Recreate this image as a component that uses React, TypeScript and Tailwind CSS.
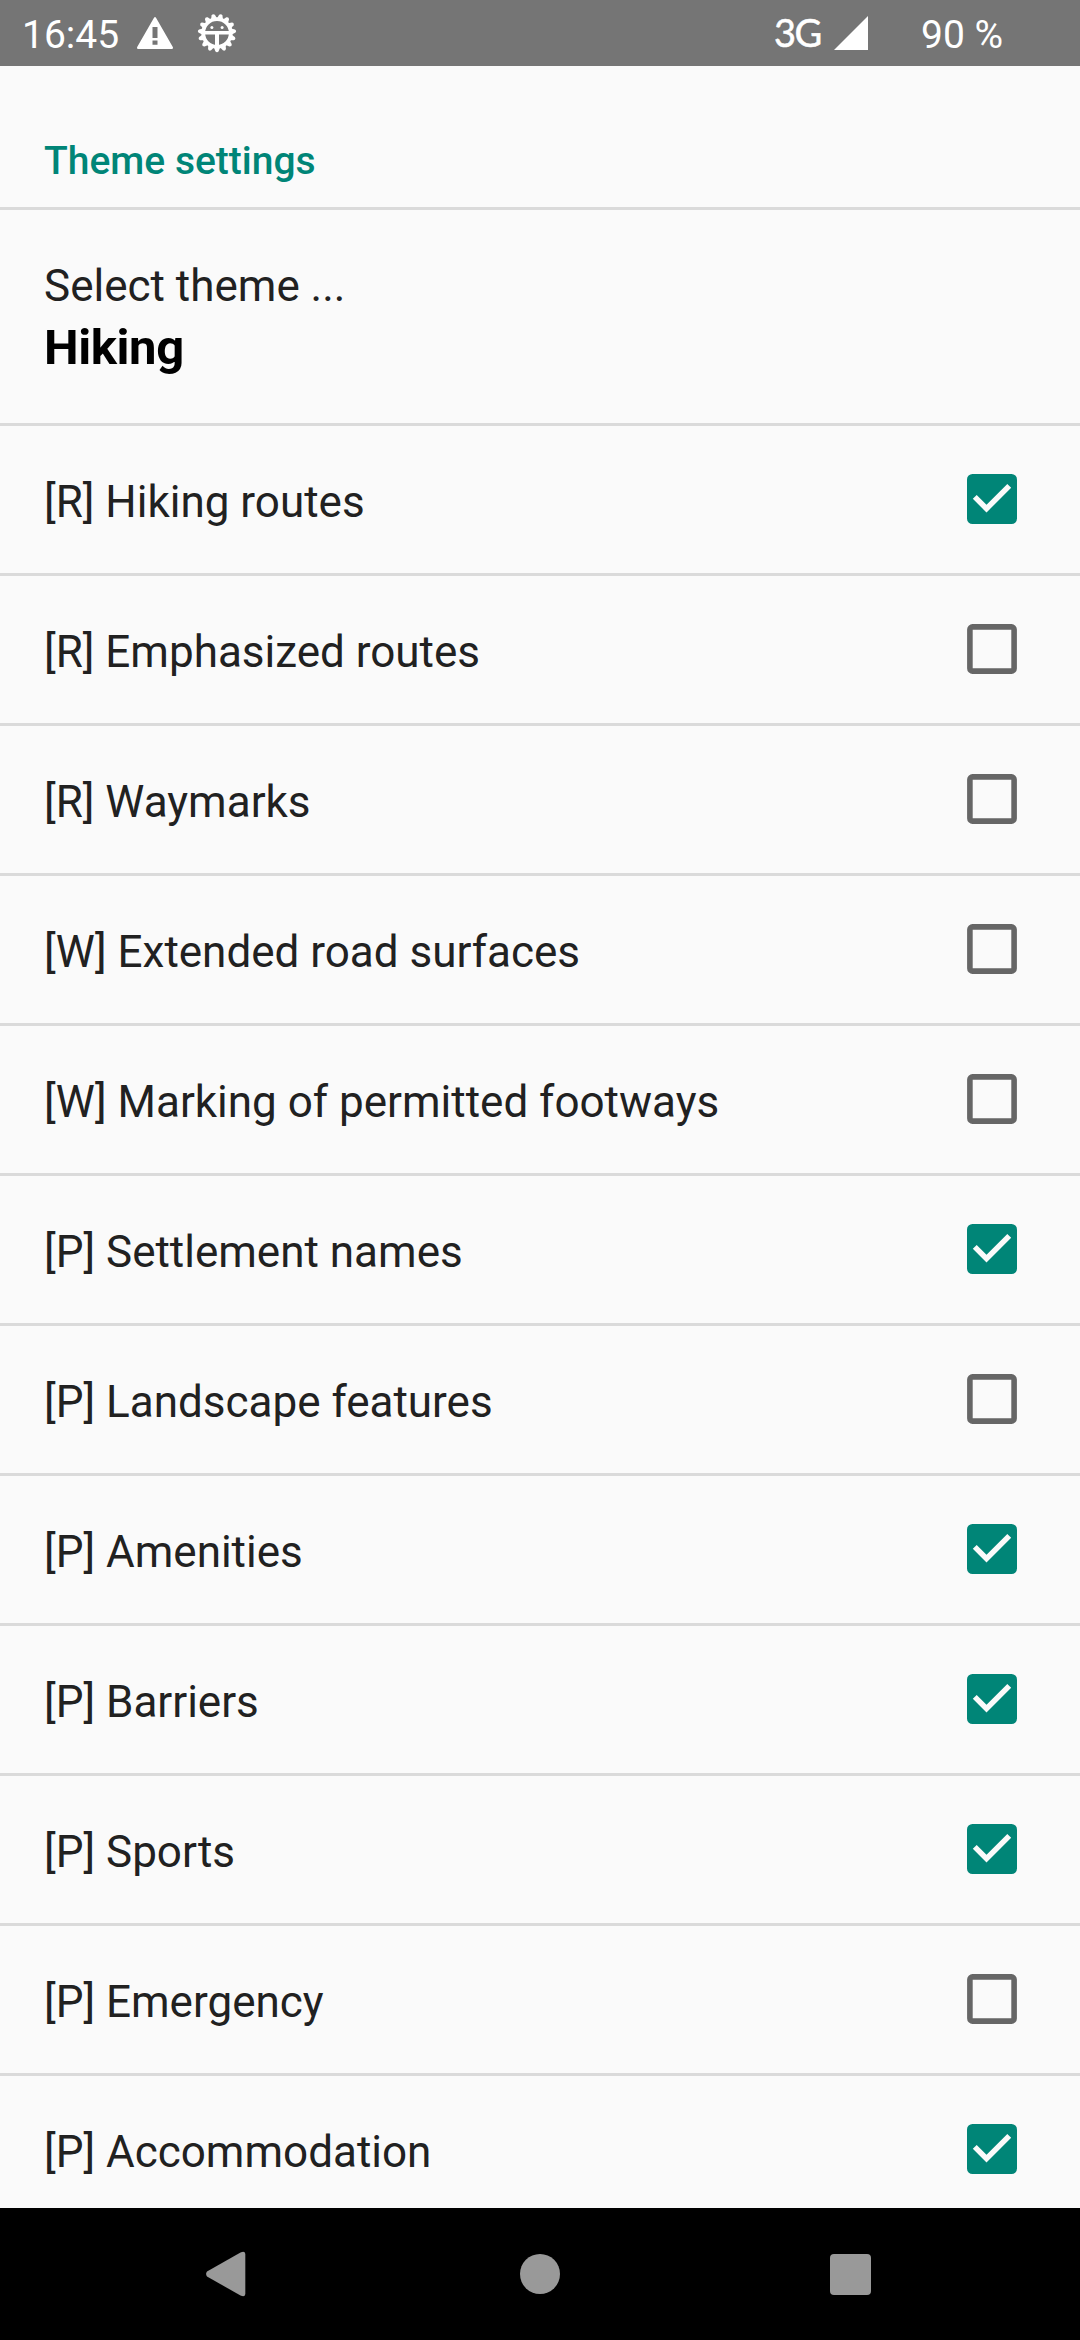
const items: [string, boolean][] = [
  ["[R] Hiking routes", true],
  ["[R] Emphasized routes", false],
  ["[R] Waymarks", false],
  ["[W] Extended road surfaces", false],
  ["[W] Marking of permitted footways", false],
  ["[P] Settlement names", true],
  ["[P] Landscape features", false],
  ["[P] Amenities", true],
  ["[P] Barriers", true],
  ["[P] Sports", true],
  ["[P] Emergency", false],
  ["[P] Accommodation", true],
];

function CheckBox({ checked }: { checked: boolean }) {
  return (
    <svg viewBox="0 0 50 50" className="h-[50px] w-[50px] shrink-0">
      {checked ? (
        <>
          <rect x="0" y="0" width="50" height="50" rx="5.5" fill="#008577" />
          <path d="M19.5 38.5 5.8 24.8l3.9-3.9 9.8 9.8L40.3 9.9l3.9 3.9z" fill="#fafafa" />
        </>
      ) : (
        <rect x="2.9" y="2.9" width="44.2" height="44.2" rx="2.6" fill="none" stroke="#666666" strokeWidth="5.6" />
      )}
    </svg>
  );
}

const teeth = Array.from({ length: 15 }, (_, i) => i * 24);

function GearIcon() {
  return (
    <svg viewBox="-20 -20 40 40" className="ml-[20px] mt-[13px] h-[40px] w-[40px]">
      <circle r="13.8" fill="none" stroke="#fff" strokeWidth="3.8" />
      {teeth.map((a) => (
        <path key={a} d="M-3 14.500h6L1.700 18.200q-1.700 2-3.400 0z" fill="#fff" transform={`rotate(${a})`} />
      ))}
      <path d="M-13-2h26v3.600H2v12h-4v-12H-13z" fill="#fff" />
      <circle cx="-5.1" cy="-5.6" r="1.5" fill="#fff" />
      <circle cx="5.1" cy="-5.6" r="1.5" fill="#fff" />
    </svg>
  );
}

export default function App() {
  return (
    <div className="flex h-[2340px] w-[1080px] flex-col overflow-hidden bg-[#fafafa] font-['Roboto',sans-serif] text-[#212121]">
      <header className="flex h-[66px] shrink-0 items-start bg-[#757575] text-[39px] leading-[66px] text-white">
        <span className="ml-[22px] mt-[2px] w-[98px] whitespace-nowrap">16:45</span>
        <svg viewBox="0 0 36 32" className="ml-[17px] mt-[17px] h-[32px] w-[36px]">
          <path fillRule="evenodd" fill="#fff" d="M17 .8q1-1.5 2 0L35.800 30q.7 1.800-1 2H1.200q-1.700-.2-1-2zM15.500 10v11h5V10zm0 13.500v4.300h5v-4.300z" />
        </svg>
        <div className="ml-[4px]"><GearIcon /></div>
        <span className="-mt-px ml-auto w-[60px] whitespace-nowrap font-['Lato',sans-serif] text-[38px] tracking-[-1.5px] [-webkit-text-stroke:0.5px_white]">3G</span>
        <svg viewBox="0 0 34 34" className="mt-[16px] h-[34px] w-[34px]">
          <path d="M34 0v34H0z" fill="#fff" />
        </svg>
        <span className="ml-[53px] mr-[76px] mt-[2px] w-[83px] whitespace-nowrap">90 %</span>
      </header>
      <main className="flex min-h-0 grow flex-col overflow-hidden">
        <h1 className="h-[144px] shrink-0 border-b-[3px] border-[#dadada] pl-[44px] pt-[73px] text-[39px] font-medium leading-[44px] text-[#008577]">
          Theme settings
        </h1>
        <section className="h-[216px] shrink-0 border-b-[3px] border-[#dadada] pl-[44px] pt-[50px]">
          <div className="text-[44px] leading-[52px]">Select theme ...</div>
          <div className="mt-[7px] text-[49px] font-bold leading-[58px] tracking-[-0.4px] text-black">Hiking</div>
        </section>
        <ul>
          {items.map(([label, checked]) => (
            <li key={label} className="flex h-[150px] items-start justify-between border-b-[3px] border-[#dadada] pl-[44px] pr-[63px] pt-[48px]">
              <span className="mt-[2px] text-[44px] leading-[52px]">{label}</span>
              <CheckBox checked={checked} />
            </li>
          ))}
        </ul>
      </main>
      <nav className="flex h-[132px] shrink-0 items-start bg-black">
        <svg viewBox="0 0 40 46" className="ml-[206px] mt-[43px] h-[46px] w-[40px]">
          <path d="M1 20.500 34.500 1.500Q39 -.5 39.300 3V43Q39 46.500 34.500 44.500L1 25.500Q-.8 23 1 20.500z" fill="#999" />
        </svg>
        <div className="ml-[274px] mt-[46px] h-[40px] w-[40px] rounded-full bg-[#999]" />
        <div className="ml-[270px] mt-[46px] h-[41px] w-[41px] rounded-[4px] bg-[#999]" />
      </nav>
    </div>
  );
}
